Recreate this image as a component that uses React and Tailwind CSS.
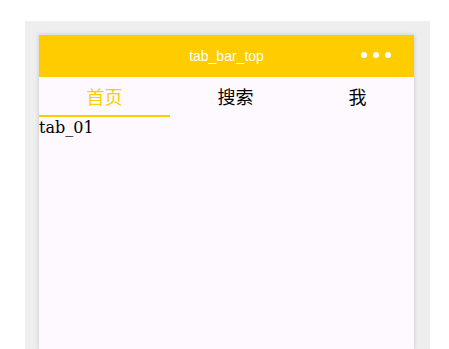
import React from 'react';

const tabs = ['首页', '搜索', '我'];

const App = () => {
  return (
    <div className="h-[349px] w-[449px] overflow-hidden bg-white pl-[25px] pt-[21px]">
      <div className="h-[328px] w-[405px] bg-[#eeeeee] pl-[14px] pt-[14px]">
        <div className="flex h-full w-[375px] flex-col bg-[#fdf9fe] shadow-[0_0_4px_rgba(0,0,0,0.18)]">
          <div className="relative flex h-[42px] items-center justify-center bg-[#ffcc00]">
            <span className="text-[14px] text-white [font-family:'Liberation_Sans',Arial,sans-serif]">
              tab_bar_top
            </span>
            <div className="absolute right-[23px] top-[17px] flex gap-[6px]">
              <span className="h-[6px] w-[6px] rounded-full bg-white" />
              <span className="h-[6px] w-[6px] rounded-full bg-white" />
              <span className="h-[6px] w-[6px] rounded-full bg-white" />
            </div>
          </div>
          <div className="flex h-[40px] [font-family:'Noto_Sans_CJK_SC',sans-serif]">
            {tabs.map((t, i) => (
              <div
                key={t}
                className={
                  'flex flex-auto items-center justify-center border-b-2 text-[18px] ' +
                  (i === 0
                    ? 'border-[#ffcc00] text-[#ffcc00]'
                    : 'border-transparent text-black')
                }
              >
                {t}
              </div>
            ))}
          </div>
          <p className="pt-[1px] text-[16px] leading-[20px] text-black [font-family:'DejaVu_Serif',serif]">
            tab_01
          </p>
        </div>
      </div>
    </div>
  );
};

export default App;
